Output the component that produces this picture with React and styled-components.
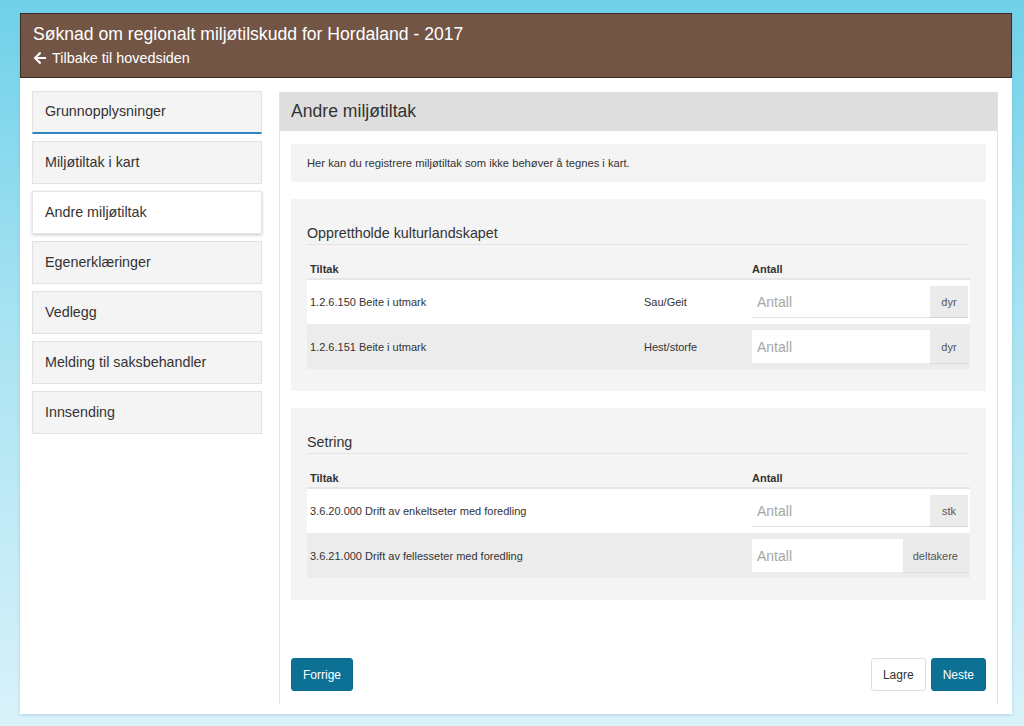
import React from 'react';
import styled, { createGlobalStyle } from 'styled-components';
import { FaArrowLeft } from 'react-icons/fa';

const GlobalStyle = createGlobalStyle`
    html, body {
        margin: 0;
        padding: 0;
    }
    body {
        font-family: "Liberation Sans", Arial, sans-serif;
        color: #333;
        background: linear-gradient(to bottom, #6fd1e9 0%, #a9e3f2 45%, #d9f2fa 100%);
        min-height: 100vh;
    }
    * {
        box-sizing: border-box;
    }
`;

const steps = [
    { label: 'Grunnopplysninger', state: 'done' },
    { label: 'Miljøtiltak i kart' },
    { label: 'Andre miljøtiltak', state: 'active' },
    { label: 'Egenerklæringer' },
    { label: 'Vedlegg' },
    { label: 'Melding til saksbehandler' },
    { label: 'Innsending' },
];

const sections = [
    {
        title: 'Opprettholde kulturlandskapet',
        rows: [
            { code: '1.2.6.150 Beite i utmark', type: 'Sau/Geit', unit: 'dyr' },
            { code: '1.2.6.151 Beite i utmark', type: 'Hest/storfe', unit: 'dyr' },
        ]
    },
    {
        title: 'Setring',
        rows: [
            { code: '3.6.20.000 Drift av enkeltseter med foredling', type: '', unit: 'stk' },
            { code: '3.6.21.000 Drift av fellesseter med foredling', type: '', unit: 'deltakere' },
        ]
    }
];

class App extends React.Component {

    renderRow = (row, index) => {
        return (
            <Row key={row.code} striped={index % 2 === 1}>
                <Cell>{row.code}</Cell>
                <Cell>{row.type}</Cell>
                <Cell>
                    <InputGroup striped={index % 2 === 1}>
                        <AmountInput placeholder="Antall" />
                        <Addon>{row.unit}</Addon>
                    </InputGroup>
                </Cell>
            </Row>
        );
    }

    renderSection = (section) => {
        return (
            <Section key={section.title}>
                <SectionTitle>{section.title}</SectionTitle>
                <Table>
                    <colgroup>
                        <col style={{ width: 334 }} />
                        <col style={{ width: 111 }} />
                        <col />
                    </colgroup>
                    <thead>
                        <tr>
                            <HeadCell>Tiltak</HeadCell>
                            <HeadCell></HeadCell>
                            <HeadCell>Antall</HeadCell>
                        </tr>
                    </thead>
                    <tbody>
                        {section.rows.map(this.renderRow)}
                    </tbody>
                </Table>
            </Section>
        );
    }

    render() {
        return (
            <Page>
                <GlobalStyle />
                <Container>
                    <Header>
                        <Title>Søknad om regionalt miljøtilskudd for Hordaland - 2017</Title>
                        <BackLink href="#">
                            <FaArrowLeft size={14} />
                            Tilbake til hovedsiden
                        </BackLink>
                    </Header>
                    <Body>
                        <Sidebar>
                            {steps.map(step => (
                                <Step key={step.label} state={step.state}>{step.label}</Step>
                            ))}
                        </Sidebar>
                        <Panel>
                            <PanelHeading>Andre miljøtiltak</PanelHeading>
                            <PanelBody>
                                <Info>Her kan du registrere miljøtiltak som ikke behøver å tegnes i kart.</Info>
                                {sections.map(this.renderSection)}
                                <Footer>
                                    <Button primary>Forrige</Button>
                                    <ButtonGroup>
                                        <Button>Lagre</Button>
                                        <Button primary>Neste</Button>
                                    </ButtonGroup>
                                </Footer>
                            </PanelBody>
                        </Panel>
                    </Body>
                </Container>
            </Page>
        );
    }
}

const Page = styled.div`
    padding: 13px 12px 12px 20px;
`

const Container = styled.div`
    width: 992px;
    height: 701px;
    background: #fff;
    box-shadow: 0 1px 3px rgba(120, 170, 190, 0.4);
    display: flex;
    flex-direction: column;
`

const Header = styled.div`
    height: 65px;
    background: #735545;
    border: 1px solid #3a2a20;
    padding: 9px 12px 0 12px;
    color: #fff;
`

const Title = styled.h1`
    margin: 0;
    font-size: 17.6px;
    font-weight: normal;
    line-height: 22px;
`

const BackLink = styled.a`
    display: inline-flex;
    align-items: center;
    gap: 5px;
    margin-top: 4px;
    color: #fff;
    font-size: 14.4px;
    text-decoration: none;
    line-height: 18px;
`

const Body = styled.div`
    display: flex;
    gap: 17px;
    padding: 13px 14px 0 12px;
    flex: 1;
`

const Sidebar = styled.div`
    width: 230px;
    display: flex;
    flex-direction: column;
    gap: 7px;
`

const Step = styled.div`
    height: 43px;
    display: flex;
    align-items: center;
    padding: 0 12px 2px 12px;
    font-size: 14.3px;
    color: #333;
    background: ${props => props.state === 'active' ? '#fff' : '#f4f4f4'};
    border: 1px solid ${props => props.state === 'active' ? '#e6e6e6' : '#e2e2e2'};
    border-bottom: ${props => props.state === 'done' ? '2px solid #2e86c1' : undefined};
    box-shadow: ${props => props.state === 'active' ? '0 1px 3px rgba(0, 0, 0, 0.22)' : 'none'};
`

const Panel = styled.div`
    flex: 1;
    height: 612px;
    margin-top: 1px;
    border-left: 1px solid #e2e2e2;
    border-right: 1px solid #e2e2e2;
    display: flex;
    flex-direction: column;
`

const PanelHeading = styled.div`
    height: 39px;
    background: #dedede;
    padding: 0 11px;
    display: flex;
    align-items: center;
    font-size: 17.6px;
    color: #333;
`

const PanelBody = styled.div`
    padding: 13px 11px 13px 11px;
    display: flex;
    flex-direction: column;
    gap: 17px;
    flex: 1;
`

const Info = styled.div`
    height: 38px;
    background: #f4f4f4;
    padding: 0 16px;
    display: flex;
    align-items: center;
    font-size: 11.2px;
    color: #333;
`

const Section = styled.div`
    height: 192px;
    background: #f4f4f4;
    padding: 24px 16px 0 16px;
`

const SectionTitle = styled.h4`
    margin: 0;
    font-size: 14.3px;
    font-weight: normal;
    color: #333;
    line-height: 20px;
    padding-bottom: 1px;
    border-bottom: 1px solid #e4e4e4;
    margin-right: 2px;
`

const Table = styled.table`
    width: 663px;
    margin-top: 13px;
    border-collapse: collapse;
    table-layout: fixed;
    font-size: 11px;
`

const HeadCell = styled.th`
    text-align: left;
    font-weight: bold;
    padding: 5px 3px 3px 3px;
    color: #333;
    border-bottom: 2px solid #e6e6e6;
    &:last-child {
        padding-left: 0;
    }
`

const Row = styled.tr`
    height: 45px;
    background: ${props => props.striped ? '#ececec' : '#fff'};
`

const Cell = styled.td`
    padding: 0 3px;
    vertical-align: middle;
    color: #333;
    &:last-child {
        padding: 0 2px 0 0;
    }
`

const InputGroup = styled.div`
    display: flex;
    height: ${props => props.striped ? '33px' : '32px'};
    width: 216px;
    border-bottom: ${props => props.striped ? 'none' : '1px solid #e3e3e3'};
`

const AmountInput = styled.input`
    flex: 1;
    min-width: 0;
    border: none;
    outline: none;
    background: #fff;
    padding: 0 5px;
    font-family: "Liberation Sans", Arial, sans-serif;
    font-size: 14px;
    color: #333;
    &::placeholder {
        color: #a6a6a6;
    }
`

const Addon = styled.span`
    display: flex;
    align-items: center;
    padding: 0 10px;
    min-width: 38px;
    justify-content: center;
    background: #ebebeb;
    font-size: 11px;
    color: #555;
    box-shadow: 0 1px 1px rgba(0, 0, 0, 0.06);
`

const Footer = styled.div`
    margin-top: auto;
    display: flex;
    justify-content: space-between;
    align-items: center;
`

const ButtonGroup = styled.div`
    display: flex;
    gap: 5px;
`

const Button = styled.button`
    height: 33px;
    padding: 0 11px;
    border-radius: 3px;
    font-family: "Liberation Sans", Arial, sans-serif;
    font-size: 12px;
    cursor: pointer;
    background: ${props => props.primary ? '#0d7196' : '#fff'};
    color: ${props => props.primary ? '#fff' : '#333'};
    border: 1px solid ${props => props.primary ? '#0b6a8d' : '#dedede'};
`

export default App;
